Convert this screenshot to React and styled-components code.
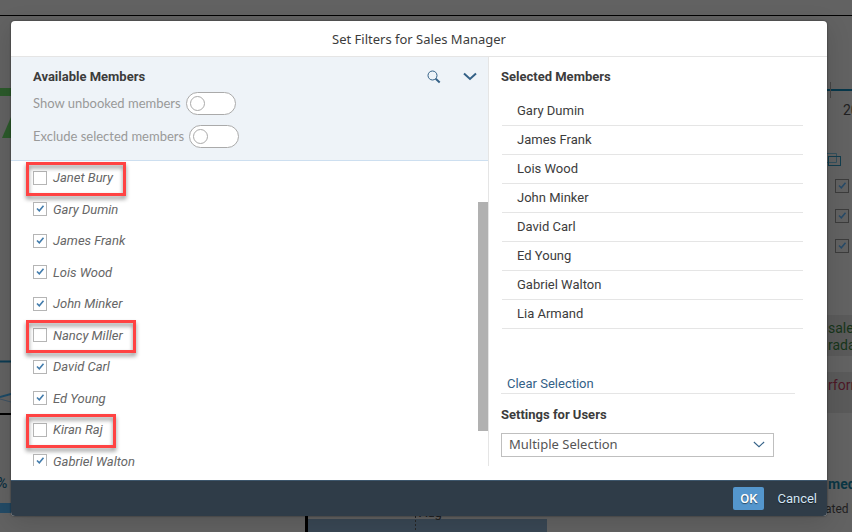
import React, { useState } from "react";
import styled, { createGlobalStyle, css } from "styled-components";

const GlobalStyle = createGlobalStyle`
  *, *::before, *::after { box-sizing: border-box; }
  body { margin: 0; background: #626262; }
  body, button, input, select { font-family: Roboto, "Liberation Sans", sans-serif; }
`;

const Page = styled.div`
  position: relative;
  display: flex;
  min-height: 100vh;
  padding: 21px 25px 16px 11px;
  overflow: hidden;
`;

/* ---------- dimmed dashboard behind the dialog ---------- */

const Dashboard = styled.div`
  position: absolute;
  inset: 0;
  display: flex;
  flex-direction: column;
  color: #1f2021;
  font-size: 14px;
`;

const TopBar = styled.div`
  flex: none;
  height: 16px;
  border-bottom: 1px solid #000;
`;

const Tiles = styled.div`
  flex: 1;
  display: grid;
  grid-template-columns: 11px 1fr 25px;
  min-height: 0;
`;

const Edge = styled.div`
  display: flex;
  flex-direction: column;
  overflow: hidden;
  white-space: nowrap;
`;

const Drawing = styled.svg`
  flex: none;
  display: block;
`;

const Percent = styled.span`
  height: 24px;
  line-height: 24px;
  margin-left: -3px;
  color: #0c2f40;
  font-size: 14px;
  font-weight: 500;
`;

const Year = styled.span`
  padding-left: 16px;
  height: 24px;
  line-height: 24px;
`;

const DimTicks = styled.div`
  display: flex;
  flex-direction: column;
  gap: 16px;
  padding: 12px 0 62px 8px;
`;

const Note = styled.div`
  flex: none;
  height: 41px;
  margin-bottom: 16px;
  padding: 5px 0 0 1px;
  background: #5a5a5a;
  color: ${(p) => p.$color};
  line-height: 17px;
`;

const TileTitle = styled.div`
  padding: 45px 0 0 1px;
  line-height: 20px;
  font-weight: 700;
  color: #0b3644;
`;

const TileText = styled.div`
  padding-top: 7px;
  margin-left: -2px;
  font-size: 12px;
  line-height: 16px;
`;

const BottomChart = styled.div`
  align-self: end;
  padding-left: 294px;
`;

/* ---------- dialog ---------- */

const Dialog = styled.section`
  position: relative;
  flex: 1;
  display: flex;
  flex-direction: column;
  background: #fff;
  border-radius: 4px;
  overflow: hidden;
  color: #3c3c3c;
  font-size: 13px;
`;

const Shade = styled.div`
  position: relative;
  flex: 1;
  display: flex;
  min-width: 0;
  border-radius: 4px;
  box-shadow: 0 0 2px rgba(0, 0, 0, 0.6), 0 6px 24px rgba(0, 0, 0, 0.14);
`;

const DialogHeader = styled.header`
  flex: none;
  height: 36px;
  border-bottom: 1px solid #e5e5e5;
  text-align: center;
`;

const Title = styled.h1`
  margin: 0;
  font-family: "Noto Sans", "Open Sans", sans-serif;
  font-size: 13px;
  font-weight: 400;
  line-height: 36px;
`;

const Body = styled.div`
  flex: 1;
  display: grid;
  grid-template-columns: 478fr 338fr;
  min-height: 0;
  padding-bottom: 14px;
`;

const Available = styled.div`
  display: flex;
  flex-direction: column;
  min-height: 0;
  border-right: 1px solid #e5e5e5;
`;

const Tools = styled.div`
  flex: none;
  display: flex;
  flex-direction: column;
  height: 104px;
  padding: 8px 11px 0 22px;
  background: #eef3f8;
  border-bottom: 1px solid #cddff0;
`;

const ToolsHead = styled.div`
  display: flex;
  align-items: center;
  justify-content: space-between;
  height: 24px;
`;

const Heading = styled.h2`
  margin: 0;
  font-size: 13px;
  font-weight: 700;
  line-height: 24px;
`;

const IconGroup = styled.div`
  display: flex;
  gap: 22px;
`;

const IconButton = styled.button`
  display: flex;
  padding: 0;
  border: 0;
  background: none;
  color: #346187;
  cursor: pointer;
`;

const ToggleRow = styled.label`
  display: flex;
  align-items: center;
  gap: 5px;
  height: 28px;
  margin-bottom: 5px;
  color: #999;
  font-family: Lato, "Liberation Sans", sans-serif;
  line-height: 24px;
`;

const Toggle = styled.input`
  appearance: none;
  display: flex;
  align-items: center;
  width: 50px;
  height: 23px;
  margin: 0;
  padding: 0 3px;
  border: 1px solid #aaa;
  border-radius: 12px;
  background: #fff;
  cursor: pointer;

  &::before {
    content: "";
    width: 15px;
    height: 15px;
    border: 1px solid #aaa;
    border-radius: 50%;
  }
  &:checked { justify-content: flex-end; background: #d6e8f7; }
`;

const ListArea = styled.div`
  display: grid;
  grid-template-columns: 1fr 10px;
  height: 305px;
  overflow: hidden;
`;

const MemberList = styled.ul`
  display: grid;
  grid-auto-rows: 1fr;
  height: 316px;
  margin: 0;
  padding: 1px 0 0 22px;
  list-style: none;
`;

const ScrollThumb = styled.div`
  height: 229px;
  margin-top: 41px;
  background: #b1b1b1;
`;

const MemberItem = styled.li`
  display: flex;
`;

const Member = styled.label`
  position: relative;
  display: flex;
  align-items: center;
  gap: 6px;
  color: #666;
  font-style: italic;
  cursor: pointer;

  ${(p) =>
    p.$marked &&
    css`
      &::after {
        content: "";
        position: absolute;
        inset: 0 -13px -2px -7px;
        border: 3px solid #ff4343;
        filter: drop-shadow(0 3px 2px rgba(0, 0, 0, 0.45));
        pointer-events: none;
      }
    `}
`;

const TICK =
  "url(\"data:image/svg+xml,%3Csvg xmlns='http://www.w3.org/2000/svg' width='12' height='12'%3E%3Cpath d='M3 5.5 5.3 7.800 9.500 2.800' fill='none' stroke='%23427cac' stroke-width='1.6'/%3E%3C/svg%3E\")";

const CheckBox = styled.input`
  appearance: none;
  flex: none;
  width: 14px;
  height: 14px;
  margin: 0;
  border: 1px solid #b5b5b5;
  background-color: #fff;
  &:checked { background-image: ${TICK}; }
`;

const DimCheckBox = styled(CheckBox)`
  border-color: #646464;
  background-color: transparent;
  filter: brightness(0.6);
`;

const Selected = styled.div`
  display: flex;
  flex-direction: column;
  align-items: stretch;
  padding: 8px 24px 0 12px;
`;

const SelectedList = styled.ul`
  margin: 8px 0 0 1px;
  padding: 0;
  list-style: none;
`;

const SelectedItem = styled.li`
  height: 29px;
  padding-left: 15px;
  border-bottom: 1px solid #e5e5e5;
  line-height: 28px;
`;

const ClearBar = styled.div`
  margin: 45px 8px 9px 0;
  height: 20px;
  padding-left: 6px;
  border-bottom: 1px solid #e5e5e5;
`;

const ClearButton = styled.button`
  padding: 0;
  border: 0;
  background: none;
  color: #346187;
  font-size: 13px;
  line-height: 20px;
  cursor: pointer;
`;

const SelectBox = styled.div`
  display: grid;
  align-items: center;
  margin: 6px 29px 0 0;
  > * { grid-area: 1 / 1; }
`;

const Select = styled.select`
  appearance: none;
  width: 100%;
  height: 24px;
  padding: 0 24px 3px 7px;
  border: 1px solid #bfbfbf;
  border-radius: 0;
  background: #fff;
  color: #555;
  font-family: "Noto Sans", "Open Sans", sans-serif;
  font-size: 13px;
`;

const SelectArrow = styled.span`
  display: flex;
  justify-self: end;
  margin-right: 9px;
  color: #346187;
  pointer-events: none;
`;

const Footer = styled.footer`
  flex: none;
  display: flex;
  align-items: center;
  justify-content: flex-end;
  gap: 13px;
  height: 36px;
  padding-right: 10px;
  background: #2f3c48;
  border-top: 1px solid #3d566c;
`;

const FooterButton = styled.button`
  height: 23px;
  padding: ${(p) => (p.$primary ? "0 7px" : "0")};
  border: 0;
  border-radius: 2px;
  background: ${(p) => (p.$primary ? "#5496cd" : "transparent")};
  color: ${(p) => (p.$primary ? "#fff" : "#d3e5f5")};
  font-size: 13px;
  font-weight: ${(p) => (p.$primary ? 500 : 400)};
  text-shadow: 0 1px 1px rgba(0, 0, 0, 0.5);
  cursor: pointer;
`;

function SearchIcon() {
  return (
    <svg width="14" height="14" viewBox="0 0 14 14" fill="none" stroke="currentColor">
      <circle cx="5.5" cy="5.5" r="4.5" strokeWidth="1" />
      <path d="M8.7 8.7 12.7 12.5" strokeWidth="2" />
    </svg>
  );
}

function ChevronIcon({ size = 14, weight = 2 }) {
  return (
    <svg width={size} height={size} viewBox="0 0 14 14" fill="none" stroke="currentColor">
      <path d="M1 3.5 7 9 13 3.5" strokeWidth={weight} />
    </svg>
  );
}

const MEMBERS = [
  { name: "Janet Bury", marked: true },
  { name: "Gary Dumin" },
  { name: "James Frank" },
  { name: "Lois Wood" },
  { name: "John Minker" },
  { name: "Nancy Miller", marked: true },
  { name: "David Carl" },
  { name: "Ed Young" },
  { name: "Kiran Raj", marked: true },
  { name: "Gabriel Walton" },
];

const INITIAL = [
  "Gary Dumin",
  "James Frank",
  "Lois Wood",
  "John Minker",
  "David Carl",
  "Ed Young",
  "Gabriel Walton",
  "Lia Armand",
];

function Backdrop() {
  return (
    <Dashboard>
      <TopBar />
      <Tiles>
        <Edge>
          <Drawing width="11" height="455">
            <rect y="72" width="11" height="8" fill="#2c5a2b" />
            <path d="M11 101V122H2Z" fill="#2c5a2b" />
            <path d="M0 345.5H11" stroke="#0b3b52" strokeWidth="2" />
            <path d="M0 381 11 378" stroke="#1c4a66" strokeWidth="2" />
            <path d="M0 383 11 386" stroke="#3e5263" />
            <path d="M0 398H11" stroke="#000" strokeWidth="2" />
          </Drawing>
          <Percent>%</Percent>
          <Drawing width="11" height="18">
            <rect y="8" width="11" height="10" fill="#234b66" />
          </Drawing>
        </Edge>
        <BottomChart>
          <Drawing width="244" height="20">
            <path d="M1.5 0V20" stroke="#000" strokeWidth="3" />
            <rect x="3" y="7" width="239" height="13" fill="#394754" />
            <path d="M110.5 0V20" stroke="#262626" strokeDasharray="2 2" />
            <text x="114" y="5" fontSize="13" fill="#1f2021">Aug</text>
          </Drawing>
        </BottomChart>
        <Edge>
          <Drawing width="25" height="82">
            <path d="M0 74H25" stroke="#07374a" strokeWidth="2" />
            <path d="M3.5 66V83" stroke="#444" />
          </Drawing>
          <Year>20</Year>
          <Drawing width="25" height="45" fill="none">
            <path d="M0 31.5H9.5V40.5H0" stroke="#33505c" />
            <rect x="1.5" y="34.5" width="12" height="9" stroke="#123d4e" />
          </Drawing>
          <DimTicks>
            <DimCheckBox type="checkbox" checked readOnly tabIndex={-1} aria-label="Region 1" />
            <DimCheckBox type="checkbox" checked readOnly tabIndex={-1} aria-label="Region 2" />
            <DimCheckBox type="checkbox" checked readOnly tabIndex={-1} aria-label="Region 3" />
          </DimTicks>
          <Note $color="#17351a">
            sale
            <br />
            rada
          </Note>
          <Note $color="#4d1726">rform</Note>
          <TileTitle>med</TileTitle>
          <TileText>ated D</TileText>
        </Edge>
      </Tiles>
    </Dashboard>
  );
}

export default function App() {
  const [selected, setSelected] = useState(INITIAL);
  const toggle = (name) =>
    setSelected((s) => (s.includes(name) ? s.filter((n) => n !== name) : [...s, name]));

  return (
    <>
      <GlobalStyle />
      <Page>
        <Backdrop />
        <Shade>
          <Dialog role="dialog" aria-labelledby="dialog-title">
            <DialogHeader>
              <Title id="dialog-title">Set Filters for Sales Manager</Title>
            </DialogHeader>
            <Body>
              <Available>
                <Tools>
                  <ToolsHead>
                    <Heading>Available Members</Heading>
                    <IconGroup>
                      <IconButton aria-label="Search"><SearchIcon /></IconButton>
                      <IconButton aria-label="Collapse"><ChevronIcon /></IconButton>
                    </IconGroup>
                  </ToolsHead>
                  <ToggleRow>
                    Show unbooked members
                    <Toggle type="checkbox" role="switch" />
                  </ToggleRow>
                  <ToggleRow>
                    Exclude selected members
                    <Toggle type="checkbox" role="switch" />
                  </ToggleRow>
                </Tools>
                <ListArea>
                  <MemberList>
                    {MEMBERS.map((m) => (
                      <MemberItem key={m.name}>
                        <Member $marked={m.marked}>
                          <CheckBox
                            type="checkbox"
                            checked={selected.includes(m.name)}
                            onChange={() => toggle(m.name)}
                          />
                          {m.name}
                        </Member>
                      </MemberItem>
                    ))}
                  </MemberList>
                  <ScrollThumb />
                </ListArea>
              </Available>
              <Selected>
                <Heading>Selected Members</Heading>
                <SelectedList>
                  {selected.map((name) => (
                    <SelectedItem key={name}>{name}</SelectedItem>
                  ))}
                </SelectedList>
                <ClearBar>
                  <ClearButton onClick={() => setSelected([])}>Clear Selection</ClearButton>
                </ClearBar>
                <Heading as="label" htmlFor="user-mode">Settings for Users</Heading>
                <SelectBox>
                  <Select id="user-mode" defaultValue="multiple">
                    <option value="multiple">Multiple Selection</option>
                  </Select>
                  <SelectArrow><ChevronIcon size={12} weight={1.2} /></SelectArrow>
                </SelectBox>
              </Selected>
            </Body>
            <Footer>
              <FooterButton $primary>OK</FooterButton>
              <FooterButton>Cancel</FooterButton>
            </Footer>
          </Dialog>
        </Shade>
      </Page>
    </>
  );
}
